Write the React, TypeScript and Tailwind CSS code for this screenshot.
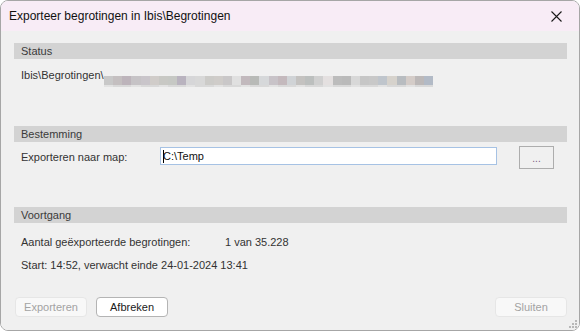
import React from "react";

const blurTop = [
  "bg-[#c8c8c8]", "bg-[#c4bfc0]", "bg-[#bdb4bb]", "bg-[#c6c3c6]", "bg-[#c9c5ca]", "bg-[#d0ccc9]",
  "bg-[#c8c8c4]", "bg-[#c6c8c4]", "bg-[#b9b3bf]", "bg-[#d6d6d8]", "bg-[#d8d8d8]", "bg-[#cccbc8]",
  "bg-[#cfccc9]", "bg-[#c9c7c8]", "bg-[#e0e0e0]", "bg-[#c2b9bd]", "bg-[#b8bab7]", "bg-[#d6d8da]",
  "bg-[#c8c3c8]", "bg-[#c4b9bd]", "bg-[#d0d3d6]", "bg-[#c4c2c0]", "bg-[#bcbfbe]", "bg-[#d0d0d0]",
  "bg-[#e4e0e0]", "bg-[#bcbcbc]", "bg-[#bababa]", "bg-[#d8d8d8]", "bg-[#c6c6c6]", "bg-[#c8c8c8]",
  "bg-[#bfc5cc]", "bg-[#d6d2cc]", "bg-[#b8bcc0]", "bg-[#d4ccc8]", "bg-[#bcb8b8]", "bg-[#b2bac6]",
];

function Band({ label }: { label: string }) {
  return (
    <div className="h-[16px] bg-[#d3d3d3] pl-[7px] flex items-center text-[#3a3a3a]">
      {label}
    </div>
  );
}

function DialogButton({ label, disabled }: { label: string; disabled?: boolean }) {
  return (
    <button
      className={
        disabled
          ? "h-[20px] w-[72px] rounded-[4px] border border-[#e6e6e6] bg-[#f8f8f8] text-[#a3a3a3] flex items-center justify-center"
          : "h-[20px] w-[72px] rounded-[4px] border border-[#b4b4b4] bg-white text-[#1a1a1a] flex items-center justify-center"
      }
    >
      {label}
    </button>
  );
}

export default function App() {
  return (
    <div className="w-[581px] h-[332px] bg-white text-[11px] leading-none font-['Liberation_Sans',Arial,sans-serif]">
      <div className="w-[580px] h-[331px] rounded-[8px] border border-[#a6a6a6] overflow-hidden flex flex-col">
        {/* Title bar */}
        <div className="h-[30px] bg-[#f8ecf6] flex items-center justify-between pl-[8px]">
          <span className="text-[#111] text-[12px]">Exporteer begrotingen in Ibis\Begrotingen</span>
          <div className="w-[46px] h-[30px] flex items-center justify-center">
            <svg width="11" height="11" viewBox="0 0 11 11">
              <path d="M0.5 0.5 L10.5 10.5 M10.5 0.5 L0.5 10.5" stroke="#1a1a1a" strokeWidth="1.1" />
            </svg>
          </div>
        </div>

        {/* Body */}
        <div className="relative flex-1 bg-[#f0f0f0] pl-[13px] pr-[12px] text-[#333]">
          <div className="mt-[12px]">
            <Band label="Status" />
          </div>
          <div className="mt-[7px] h-[18px] pl-[7px] flex items-center">
            <span className="w-[83px] whitespace-nowrap">Ibis\Begrotingen\</span>
            {/* pixelated (redacted) path */}
            <div className="w-[329px] flex flex-col self-start mt-[10px]">
              <div className="flex h-[9px]">
                {blurTop.map((c, i) => (
                  <div key={i} className={`flex-1 h-[9px] ${c}`} />
                ))}
              </div>
              <div className="flex h-[2px]">
                {blurTop.map((c, i) => (
                  <div key={i} className={`flex-1 h-[2px] ${i % 3 === 0 ? "bg-[#e2e2e2]" : "bg-[#d9d9d9]"}`} />
                ))}
              </div>
            </div>
          </div>

          <div className="mt-[42px]">
            <Band label="Bestemming" />
          </div>
          <div className="mt-[4px] h-[23px] flex items-start">
            <span className="pl-[7px] w-[146px] mt-[6px]">Exporteren naar map:</span>
            <div className="mt-[1px] w-[337px] h-[18px] border border-[#a6c2e4] bg-white flex items-center pl-[2px] text-[#111]">
              <span className="w-px h-[13px] bg-black mr-[-1px]" />
              C:\Temp
            </div>
            <div className="ml-[22px] w-[35px] h-[23px] border border-[#adadad] flex items-center justify-center text-[#7a5a7a] text-[10px] pt-[3px]">
              ...
            </div>
          </div>

          <div className="mt-[38px]">
            <Band label="Voortgang" />
          </div>
          <div className="mt-[10px] h-[18px] pl-[7px] flex items-center">
            <span className="w-[204px]">Aantal geëxporteerde begrotingen:</span>
            <span>1 van 35.228</span>
          </div>
          <div className="mt-[5px] h-[18px] pl-[7px] flex items-center">
            Start: 14:52, verwacht einde 24-01-2024 13:41
          </div>

          <div className="mt-[23px] flex items-center">
            <div className="ml-[1px]">
              <DialogButton label="Exporteren" disabled />
            </div>
            <div className="ml-[9px]">
              <DialogButton label="Afbreken" />
            </div>
            <div className="ml-auto">
              <DialogButton label="Sluiten" disabled />
            </div>
          </div>

          <svg className="absolute right-[1px] bottom-[1px]" width="9" height="9" viewBox="0 0 9 9">
            <rect x="6" y="0" width="2" height="2" fill="#b8b8b8" />
            <rect x="3" y="3" width="2" height="2" fill="#b8b8b8" />
            <rect x="6" y="3" width="2" height="2" fill="#b8b8b8" />
            <rect x="0" y="6" width="2" height="2" fill="#b8b8b8" />
            <rect x="3" y="6" width="2" height="2" fill="#b8b8b8" />
            <rect x="6" y="6" width="2" height="2" fill="#b8b8b8" />
          </svg>
        </div>
      </div>
    </div>
  );
}
